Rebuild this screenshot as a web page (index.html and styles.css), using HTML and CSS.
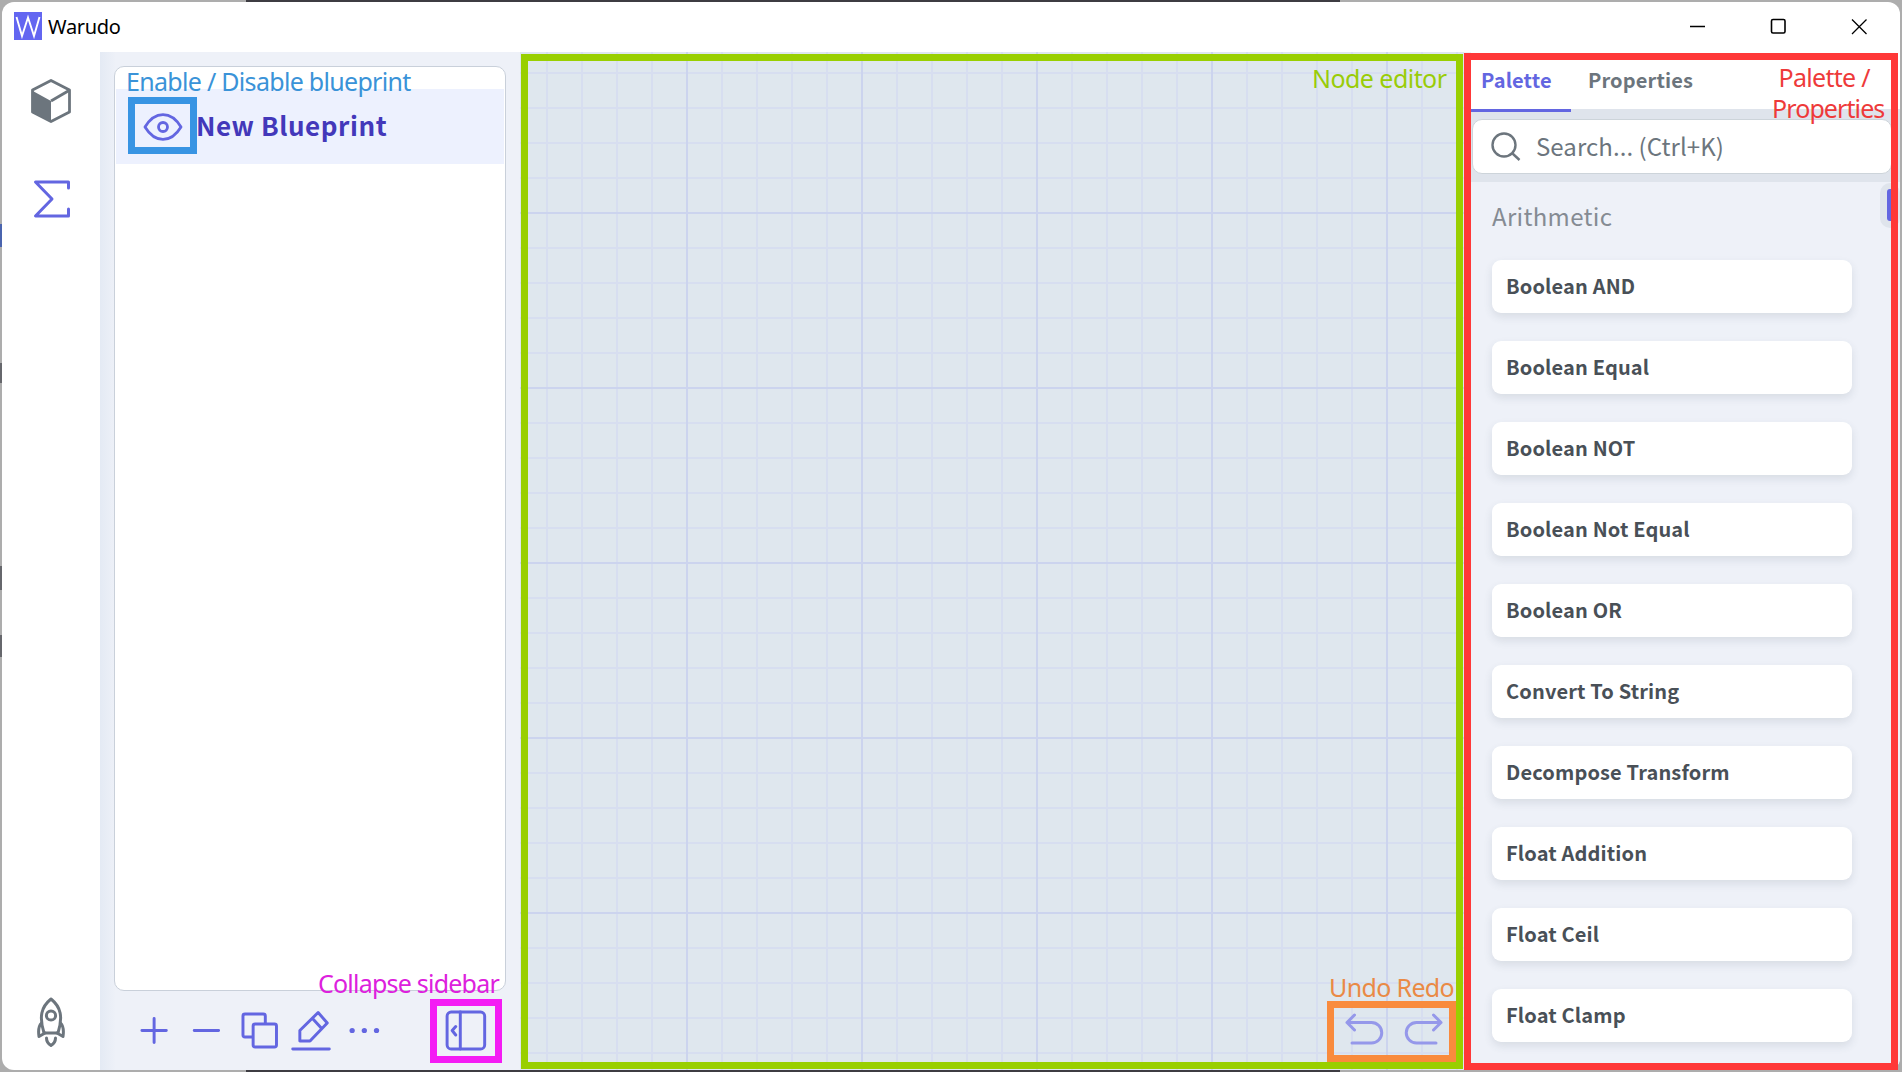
FILE: index.html
```html
<!DOCTYPE html>
<html lang="en">
<head>
<meta charset="utf-8">
<title>Warudo</title>
<link rel="stylesheet" href="styles.css">
</head>
<body>
<div class="window">
  <header class="titlebar">
    <svg class="logo" viewBox="0 0 28 28"><rect width="28" height="28" fill="#6366f1"/><path d="M2.500 5 L8 24 L14 5.500 L20 24 L25.500 5" fill="none" stroke="#fff" stroke-width="1.900"/></svg>
    <span class="app-name">Warudo</span>
    <svg class="controls" viewBox="0 0 190 20" fill="none" stroke="#000" stroke-width="1.300"><path d="M5 9.500h15"/><rect x="86.500" y="2.500" width="13.500" height="13.500" rx="1.500" stroke-width="1.600"/><path d="M167 2.500l14.500 14.500M181.500 2.500L167 17"/></svg>
  </header>
  <div class="body">
    <nav class="rail">
      <svg class="ic-cube" viewBox="0 0 42 46"><path d="M21 2.500L39.500 12v22L21 43.500 2.500 34V12z" fill="none" stroke="#6c757d" stroke-width="2.800" stroke-linejoin="round"/><path d="M2 12.500L21 23v21L2 34z" fill="#6c757d"/><path d="M21 23L39 12.500" stroke="#6c757d" stroke-width="2.800"/></svg>
      <svg class="ic-sigma" viewBox="0 0 38 38" fill="none" stroke="#6366e1" stroke-width="3" stroke-linecap="round" stroke-linejoin="round"><path d="M35.500 8V2H2.500L19 19 2.500 36H35.500V29"/></svg>
      <svg class="ic-rocket" viewBox="0 0 28 50" fill="none" stroke="#6c757d" stroke-width="3" stroke-linecap="round" stroke-linejoin="round"><path d="M7 36C2 20 4 10 14 2c10 8 12 18 7 34z"/><circle cx="14" cy="18.500" r="4.600"/><path d="M4.500 26C1.500 29 1 33 2 39.500L8 36M23.500 26c3 3 3.500 7 2.500 13.500L20 36M9.500 41c0 4 2 6 4.500 7.500 2.500-1.500 4.500-3.500 4.500-7.500"/></svg>
    </nav>
    <aside class="side">
      <div class="list">
        <div class="item">
          <svg class="ic-eye" viewBox="0 0 40 30" fill="none" stroke="#6366e1" stroke-width="2.800"><path d="M2 15C12-1.500 28-1.500 38 15 28 31.500 12 31.500 2 15z" stroke-linejoin="round"/><circle cx="20" cy="15" r="4.500"/></svg>
          <span>New Blueprint</span>
        </div>
      </div>
      <svg class="tools" viewBox="0 0 386 80" preserveAspectRatio="none" fill="none" stroke="#6366e1" stroke-width="2.900" stroke-linecap="round" stroke-linejoin="round"><path d="M27.500 39.500H51.500M39.500 27.500V51.500M79 39.500H103"/><path d="M136 46H129a2 2 0 0 1-2-2V25a2 2 0 0 1 2-2H147a2 2 0 0 1 2 2V32"/><rect x="137" y="33" width="23" height="23" rx="2"/><path d="M183 50V39.500L201 21.500 210 32 193 50z M195.500 27.500L204.500 37.500M176 58H212"/><g fill="#6366e1" stroke="none"><circle cx="234.500" cy="39.500" r="2.600"/><circle cx="246.500" cy="39.500" r="2.600"/><circle cx="258.500" cy="39.500" r="2.600"/></g><rect x="328" y="21" width="37" height="37" rx="4"/><path d="M341 21V58M336.500 35.500L333 39.500 336.500 44"/></svg>
    </aside>
    <main class="editor">
      <svg class="history" viewBox="0 0 98 32" fill="none" stroke="#9598ea" stroke-width="3" stroke-linecap="round" stroke-linejoin="round"><path d="M9.500 2L2 9.500 9.500 17M2 9.500H26.500a10 10 0 0 1 0 20.500H7"/><path d="M88.500 2L96 9.500 88.500 17M96 9.500H71.500a10 10 0 0 0 0 20.500H91"/></svg>
    </main>
    <aside class="palette">
      <div class="tabs"><span class="tab active">Palette</span><span class="tab">Properties</span></div>
      <div class="searchbar"><div class="search"><svg class="ic-search" viewBox="0 0 30 30" fill="none" stroke="#6c757d" stroke-width="2.400"><circle cx="13" cy="13" r="11.500"/><path d="M21 21L28.500 28"/></svg><span>Search... (Ctrl+K)</span></div></div>
      <div class="nodes">
        <div class="handle"></div>
        <h2>Arithmetic</h2>
        <div class="node">Boolean AND</div>
        <div class="node">Boolean Equal</div>
        <div class="node">Boolean NOT</div>
        <div class="node">Boolean Not Equal</div>
        <div class="node">Boolean OR</div>
        <div class="node">Convert To String</div>
        <div class="node">Decompose Transform</div>
        <div class="node">Float Addition</div>
        <div class="node">Float Ceil</div>
        <div class="node">Float Clamp</div>
      </div>
    </aside>
  </div>
</div>
<div class="box b-eye"></div><div class="box b-collapse"></div><div class="box b-history"></div><div class="box b-editor"></div><div class="box b-palette"></div>
<div class="note n-eye">Enable / Disable blueprint</div>
<div class="note n-collapse">Collapse sidebar</div>
<div class="note n-history">Undo Redo</div>
<div class="note n-editor">Node editor</div>
<div class="note n-palette"><span class="first">Palette /</span><br>Properties</div>
</body>
</html>
```
FILE: styles.css
```css
* { box-sizing: border-box; }
body { margin: 0; width: 1902px; height: 1072px; padding: 2px; overflow: hidden; position: relative; font-family: "Noto Sans CJK SC", "Noto Sans", sans-serif;
  background:
    linear-gradient(transparent 224px, #4a64ae 224px 247px, transparent 247px 363px, #66676c 363px 383px, transparent 383px 566px, #66676c 566px 590px, transparent 590px 635px, #66676c 635px 657px, transparent 657px) 0 0 / 2px 100% no-repeat,
    linear-gradient(90deg, #adadad 246px, #3d3c42 246px 1340px, #adadad 1340px); }
svg { display: block; flex: none; }
.window { width: 1898px; height: 1068px; border-radius: 12px; overflow: hidden; background: #fff; display: flex; flex-direction: column; }
.titlebar { height: 50px; display: flex; align-items: flex-start; padding: 10px 0 0 12px; flex: none; }
.logo { width: 28px; height: 28px; }
.app-name { font: 20px/28px "Noto Sans", sans-serif; margin: 1px 0 0 6px; letter-spacing: -.3px; color: #000; }
.controls { width: 190px; height: 20px; margin: 5px 25px 0 auto; }
.body { flex: 1; display: flex; min-height: 0; }
.rail { width: 98px; display: flex; flex-direction: column; align-items: center; padding: 26px 0 23px; }
.ic-cube { width: 42px; height: 46px; }
.ic-sigma { width: 38px; height: 38px; margin: 56px 0 0 1px; }
.ic-rocket { width: 28px; height: 50px; margin: auto 0 0; }
.side { width: 420px; padding: 14px 14px 0; background: linear-gradient(90deg, #e4eaf4, #eef1f8 16px); }
.list { height: 925px; border: 1px solid #c9d0da; border-radius: 10px; background: #fff; padding: 22px 1px 0; }
.item { height: 75px; display: flex; align-items: center; background: #edf1fe; color: #4338ba; font-weight: 700; font-size: 26px; letter-spacing: .55px; padding-left: 27px; gap: 13px; }
.item span { margin-top: -5px; }
.ic-eye { width: 40px; height: 30px; }
.tools { width: 392px; height: 80px; }
.editor { width: 944px; display: flex; align-items: flex-end; justify-content: flex-end; padding: 0 21px 25px 0; background-color: #dfe7ee;
 background-image: linear-gradient(90deg, #ccd4ee 2px, transparent 2px), linear-gradient(#ccd4ee 2px, transparent 2px), linear-gradient(90deg, #d7def0 2px, transparent 2px), linear-gradient(#d7def0 2px, transparent 2px);
 background-size: 175px 175px, 175px 175px, 35px 35px, 35px 35px; background-position: 166px 0, 0 160px, 26px 0, 0 20px; }
.history { width: 98px; height: 32px; }
.palette { flex: 1; background: #eef1f8; display: flex; flex-direction: column; padding-left: 7px; }
.tabs { height: 60px; display: flex; border-bottom: 3px solid #dfe4ec; flex: none; background: #fff; }
.tab { height: 60px; padding: 12px 18px 0 10px; font-weight: 700; font-size: 20px; line-height: 32px; letter-spacing: .15px; color: #6c757d; }
.tab.active { color: #6366e1; border-bottom: 3px solid #6366e1; width: 100px; }
.tab + .tab { padding-left: 17px; }
.searchbar { background: #dfe4ec; height: 70px; padding: 7px 8px 8px 1px; flex: none; }
.search { height: 55px; border: 1px solid #cdd4da; border-radius: 10px; background: #fff; display: flex; align-items: center; gap: 15px; padding-left: 18px; font-size: 24px; color: #6c757d; }
.search span { margin-top: -3px; letter-spacing: .06px; }
.ic-search { width: 30px; height: 30px; }
.nodes { flex: 1; min-height: 0; overflow: hidden; position: relative; padding: 14px 48px 0 21px; }
.nodes h2 { margin: 0 0 24px; height: 40px; font-weight: 400; font-size: 24px; line-height: 40px; color: #858b93; letter-spacing: .3px; }
.node { height: 53px; margin-bottom: 28px; border-radius: 9px; background: #fff; box-shadow: 0 4px 8px rgba(60,70,90,.12); padding-left: 14px; font-weight: 700; font-size: 20px; line-height: 52px; letter-spacing: .15px; color: #495057; }
.handle { position: absolute; right: 0; top: 1px; width: 20px; height: 45px; border-radius: 10px; background: #dfe4ec; }
.handle::after { content: ""; position: absolute; left: 7px; top: 6px; width: 8px; height: 32px; border-radius: 3px; background: #6366e1; }
.box { position: absolute; border: 7px solid; }
.b-eye { left: 128px; top: 97px; width: 69px; height: 57px; color: #3894e3; }
.b-collapse { left: 430px; top: 999px; width: 72px; height: 64px; color: #f41cf4; }
.b-history { left: 1327px; top: 1001px; width: 129px; height: 61px; color: #f98b3d; }
.b-editor { left: 521px; top: 54px; width: 942px; height: 1015px; color: #99cf00; }
.b-palette { left: 1464px; top: 53px; width: 434px; height: 1017px; color: #ff3838; }
.note { position: absolute; font: 25px/31px "Noto Sans", sans-serif; white-space: nowrap; letter-spacing: -.7px; }
.n-eye { left: 126px; top: 66px; color: #3a93d8; }
.n-collapse { left: 318px; top: 968px; letter-spacing: -.78px; color: #dd20dd; }
.n-history { left: 1329px; top: 972px; letter-spacing: -.65px; color: #ea8a45; }
.n-editor { left: 1312px; top: 63px; letter-spacing: -.55px; color: #99cc08; }
.n-palette { left: 1772px; top: 62px; letter-spacing: -.9px; color: #ee3a3a; text-align: center; }
.first { margin-right: 8px; letter-spacing: -.7px; }
```
